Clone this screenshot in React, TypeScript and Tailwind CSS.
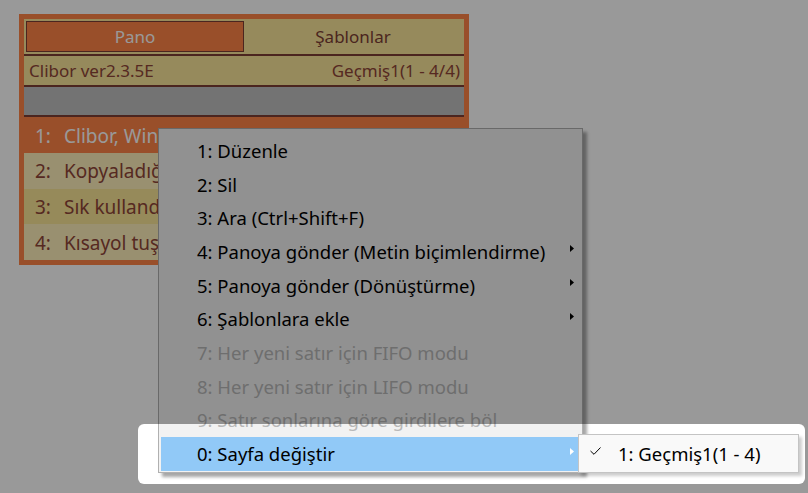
import { ReactNode } from 'react';

interface MenuItem {
  label: string;
  sub?: boolean;
  disabled?: boolean;
  active?: boolean;
}

const rows = [
  { n: '1:', text: 'Clibor, Windows için pano yardımcısıdır', active: true },
  { n: '2:', text: 'Kopyaladığınız metinler burada listelenir' },
  { n: '3:', text: 'Sık kullandığınız metinleri şablonlara ekleyin' },
  { n: '4:', text: 'Kısayol tuşu ile Clibor penceresini açın' },
];

const menuItems: MenuItem[] = [
  { label: '1: Düzenle' },
  { label: '2: Sil' },
  { label: '3: Ara (Ctrl+Shift+F)' },
  { label: '4: Panoya gönder (Metin biçimlendirme)', sub: true },
  { label: '5: Panoya gönder (Dönüştürme)', sub: true },
  { label: '6: Şablonlara ekle', sub: true },
  { label: '7: Her yeni satır için FIFO modu', disabled: true },
  { label: '8: Her yeni satır için LIFO modu', disabled: true },
  { label: '9: Satır sonlarına göre girdilere böl', disabled: true },
  { label: '0: Sayfa değiştir', sub: true, active: true },
];

const Arrow = ({ light }: { light?: boolean }) => (
  <svg width="4" height="7" viewBox="0 0 4 7" className="mb-[6px]">
    <path d="M0 0 L4 3.5 L0 7 Z" fill={light ? '#ffffff' : '#000000'} />
  </svg>
);

const Divider = () => <div className="h-[2px] bg-[#7d3f35]" />;

const Panel = ({ children }: { children: ReactNode }) => (
  <div className="w-[450px] bg-[#ff8446] p-[5px] pb-[5px]">{children}</div>
);

export default function App() {
  return (
    <div
      className="relative w-[808px] h-[493px] overflow-hidden bg-white pl-[19px] pt-[14px]"
      style={{ fontFamily: '"Noto Sans", "Liberation Sans", sans-serif' }}
    >
      <Panel>
        {/* tabs */}
        <div className="flex h-[35px] bg-[#fae699] p-[2px] text-[17px]">
          <div className="flex w-[218px] items-center justify-center border border-[#7d3f35] bg-[#ff8446] text-white">
            Pano
          </div>
          <div className="flex flex-1 items-center justify-center text-[#7d3f35]">Şablonlar</div>
        </div>
        <Divider />
        <div className="flex h-[29px] items-center justify-between bg-[#fae699] pl-[5px] pr-[4px] text-[17px] text-[#8f4538]">
          <span>Clibor ver2.3.5E</span>
          <span>Geçmiş1(1 - 4/4)</span>
        </div>
        <Divider />
        <div className="h-[28px] bg-[#c0c0c0]" />
        <Divider />
        {rows.map((r, i) => (
          <div
            key={r.n}
            className={`flex h-[35.75px] items-center overflow-hidden whitespace-nowrap pl-[11px] pt-[2px] text-[19px] ${
              r.active ? 'bg-[#ff8446] text-white' : i === 2 ? 'bg-[#fae696] text-[#8f4538]' : 'bg-[#fff0bb] text-[#8f4538]'
            }`}
          >
            <span className="w-[29px]">{r.n}</span>
            <span>{r.text}</span>
          </div>
        ))}
      </Panel>

      {/* context menu */}
      <div className="absolute left-[158px] top-[128px] w-[425px] border border-[#b0b0b0] bg-[#f2f2f2] pt-[5px] pb-[1px] shadow-[4px_4px_3px_rgba(0,0,0,0.35)]">
        {menuItems.map((m) => (
          <div
            key={m.label}
            className={`ml-[2px] mr-[4px] flex h-[33.7px] items-center justify-between pl-[36px] pr-[4px] text-[18.5px] ${
              m.active ? 'bg-[#91c9f7] text-black' : m.disabled ? 'text-[#b8b8b8]' : 'text-black'
            }`}
          >
            <span>{m.label}</span>
            {m.sub && <Arrow light={m.active} />}
          </div>
        ))}
      </div>

      {/* submenu */}
      <div className="absolute left-[578px] top-[434px] w-[221px] border border-[#c4c4c4] bg-[#f9f9f9] py-[3px] shadow-[3px_3px_3px_rgba(0,0,0,0.2)]">
        <div className="flex h-[31px] items-center text-[18.5px] text-black">
          <svg width="11" height="8" viewBox="0 0 11 8" className="ml-[11px] mb-[5px]">
            <polyline points="0.5,4 4,7.3 10.5,0.5" fill="none" stroke="#000" strokeWidth="1" />
          </svg>
          <span className="ml-[17px]">1: Geçmiş1(1 - 4)</span>
        </div>
      </div>

      {/* spotlight dim layer */}
      <div className="pointer-events-none absolute left-[138px] top-[424px] h-[60px] w-[667px] rounded-[6px] shadow-[0_0_0_2000px_rgba(0,0,0,0.4)]" />
    </div>
  );
}
